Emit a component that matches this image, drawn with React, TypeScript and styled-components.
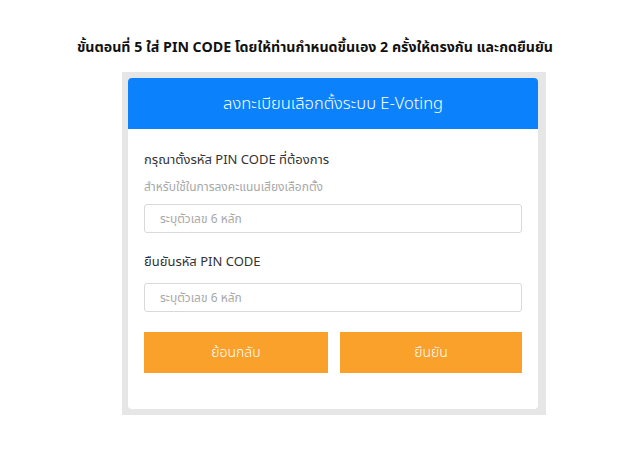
import React from "react";
import styled, { createGlobalStyle } from "styled-components";

const Global = createGlobalStyle`
  html, body { margin: 0; padding: 0; background: #ffffff; }
  body { font-family: "Noto Sans Thai", "Noto Sans", "DejaVu Sans", sans-serif; }
`;

const Page = styled.div`
  width: 640px;
  height: 450px;
  display: flex;
  flex-direction: column;
  align-items: flex-start;
  box-sizing: border-box;
  padding-top: 38px;
`;

const Heading = styled.h1`
  margin: 0;
  align-self: center;
  font-size: 14.2px;
  font-weight: 700;
  color: #111;
  line-height: 20px;
  height: 20px;
  transform: translateX(-5px);
`;

const Frame = styled.div`
  margin: 14px 0 0 122px;
  width: 424px;
  box-sizing: border-box;
  padding: 6px 8px 6px 6px;
  background: #e6e6e6;
`;

const Card = styled.div`
  background: #ffffff;
  border-radius: 4px;
  overflow: hidden;
`;

const Header = styled.div`
  height: 51px;
  background: #0b82fb;
  color: #ffffff;
  display: flex;
  align-items: center;
  justify-content: center;
  font-size: 16.5px;
  font-weight: 300;
`;

const Body = styled.div`
  padding: 22px 16px 36px;
  display: flex;
  flex-direction: column;
`;

const Label = styled.div<{ $gap: number }>`
  font-size: 13px;
  color: #333;
  line-height: 18px;
  margin-top: ${(p) => p.$gap}px;
`;

const Hint = styled.div`
  font-size: 12px;
  color: #a8a8a8;
  line-height: 18px;
  margin-top: 9px;
`;

const Input = styled.input<{ $gap: number }>`
  margin-top: ${(p) => p.$gap}px;
  height: 29px;
  box-sizing: border-box;
  border: 1px solid #d9d9d9;
  border-radius: 3px;
  padding: 0 15px;
  font-family: inherit;
  font-size: 12px;
  color: #333;
  outline: none;
  &::placeholder { color: #a8a8a8; }
`;

const Buttons = styled.div`
  margin-top: 20px;
  display: grid;
  grid-template-columns: 184px 182px;
  column-gap: 12px;
`;

const Button = styled.button`
  height: 41px;
  border: none;
  background: #f9a12b;
  color: #ffffff;
  font-family: inherit;
  font-size: 14px;
  font-weight: 300;
  cursor: pointer;
`;

export default function App() {
  return (
    <>
      <Global />
      <Page>
        <Heading>ขั้นตอนที่ 5 ใส่ PIN CODE โดยให้ท่านกำหนดขึ้นเอง 2 ครั้งให้ตรงกัน และกดยืนยัน</Heading>
        <Frame>
          <Card>
            <Header>ลงทะเบียนเลือกตั้งระบบ E-Voting</Header>
            <Body>
              <Label $gap={0}>กรุณาตั้งรหัส PIN CODE ที่ต้องการ</Label>
              <Hint>สำหรับใช้ในการลงคะแนนเสียงเลือกตั้ง</Hint>
              <Input $gap={8} placeholder="ระบุตัวเลข 6 หลัก" />
              <Label $gap={20}>ยืนยันรหัส PIN CODE</Label>
              <Input $gap={12} placeholder="ระบุตัวเลข 6 หลัก" />
              <Buttons>
                <Button>ย้อนกลับ</Button>
                <Button>ยืนยัน</Button>
              </Buttons>
            </Body>
          </Card>
        </Frame>
      </Page>
    </>
  );
}
